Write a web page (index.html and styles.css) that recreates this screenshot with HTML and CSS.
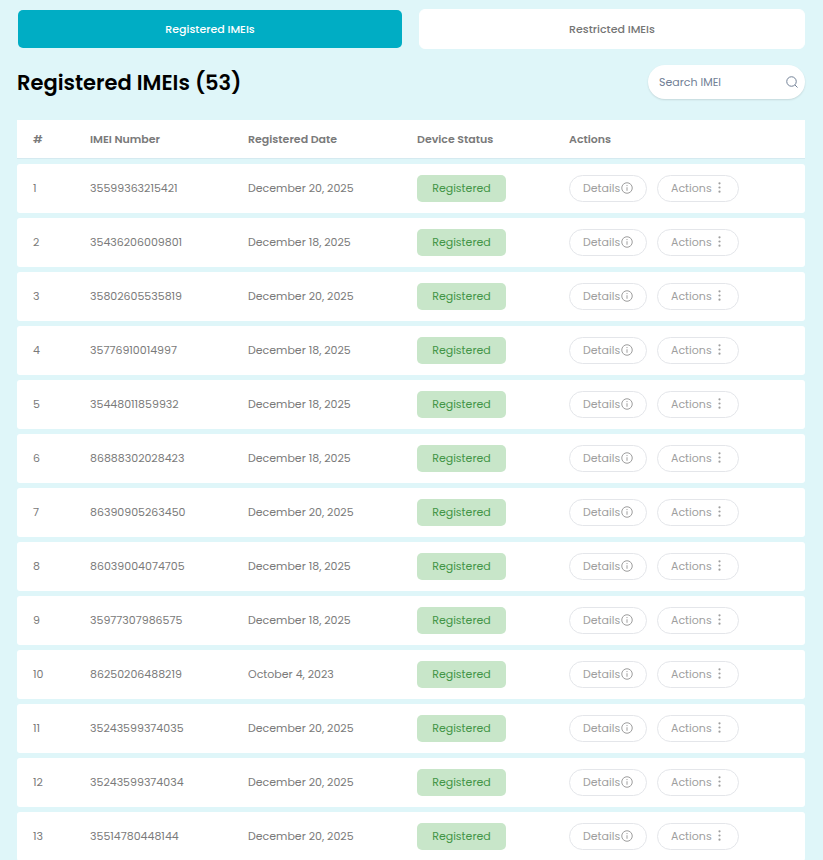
FILE: index.html
```html
<!DOCTYPE html>
<html lang="en">
<head>
    <meta charset="UTF-8">
    <meta name="viewport" content="width=device-width, initial-scale=1.0">
    <title>Registered IMEIs</title>
    <link rel="stylesheet" href="styles.css">
</head>
<body>
    <svg class="sprite" aria-hidden="true">
        <symbol id="icon-info" viewBox="0 0 24 24">
            <circle cx="12" cy="12" r="10.5"/>
            <path d="M12 10.5v7M12 6v2.2"/>
        </symbol>
        <symbol id="icon-search" viewBox="0 0 24 24">
            <circle cx="11" cy="11" r="9.5"/>
            <path d="M18 18l5 5"/>
        </symbol>
    </svg>

    <main class="page">
        <nav class="tabs">
            <button type="button" class="tab active">Registered IMEIs</button>
            <button type="button" class="tab">Restricted IMEIs</button>
        </nav>

        <div class="toolbar">
            <h1>Registered IMEIs (53)</h1>
            <label class="search">
                <input type="text" id="search" placeholder="Search IMEI" aria-label="Search IMEI">
                <svg class="icon"><use href="#icon-search"/></svg>
            </label>
        </div>

        <table class="imei-table">
            <colgroup>
                <col class="col-index">
                <col class="col-imei">
                <col class="col-date">
                <col class="col-status">
                <col>
            </colgroup>
            <thead>
                <tr>
                    <th>#</th>
                    <th>IMEI Number</th>
                    <th>Registered Date</th>
                    <th>Device Status</th>
                    <th>Actions</th>
                </tr>
            </thead>
            <tbody id="devices">
            </tbody>
        </table>
    </main>

    <script src="script.js"></script>
</body>
</html>
```
FILE: styles.css
```css
* {
    box-sizing: border-box;
}
body {
    margin: 0;
    font-family: Poppins, Inter, sans-serif;
    font-size: 11px;
    color: #7a7a7a;
    background-color: #dff6f9;
}
button, input {
    font: inherit;
}
.sprite {
    display: none;
}
.page {
    height: 100vh;
    padding: 9px 18px 0 17px;
    overflow: hidden;
}

/* tabs */
.tabs {
    display: grid;
    grid-template-columns: 1fr 1fr;
    gap: 16px;
}
.tab {
    height: 40px;
    border: 1px solid #fff;
    border-radius: 6px;
    background: #fff;
    color: #757575;
    font-weight: 500;
    cursor: pointer;
}
.tab.active {
    border-color: transparent;
    background: #00adc4;
    background-clip: padding-box;
    color: #fff;
}

/* heading and search */
.toolbar {
    display: flex;
    justify-content: space-between;
    align-items: center;
    margin: 16px 0;
}
h1 {
    margin: 0;
    font-size: 21px;
    font-weight: 600;
    color: #000;
}
.search {
    display: flex;
    align-items: center;
    width: 157px;
    height: 34px;
    padding: 0 7px 0 11px;
    border-radius: 17px;
    background: #fff;
    box-shadow: 0 1px 2px rgba(0, 0, 0, 0.12);
}
.search input {
    flex: 1;
    min-width: 0;
    padding: 0;
    border: none;
    outline: none;
    background: none;
}
.search input::placeholder {
    color: #718096;
}
.icon {
    width: 12px;
    height: 12px;
    fill: none;
    stroke: currentColor;
    stroke-width: 2;
}
.search .icon {
    color: #718096;
}

/* table */
.imei-table {
    width: 100%;
    table-layout: fixed;
    border-collapse: separate;
    border-spacing: 0 5px;
}
.col-index {
    width: 57px;
}
.col-imei {
    width: 158px;
}
.col-date {
    width: 169px;
}
.col-status {
    width: 152px;
}
th, td {
    padding: 0 16px;
    text-align: left;
    background: #fff;
}
th {
    height: 39px;
    border-bottom: 1px solid #d5eaf0;
    font-weight: 600;
}
td {
    height: 49px;
}
td:first-child {
    border-radius: 3px 0 0 3px;
}
td:last-child {
    border-radius: 0 3px 3px 0;
}
.badge {
    display: inline-flex;
    align-items: center;
    justify-content: center;
    width: 89px;
    height: 27px;
    border-radius: 5px;
    background: #c8e6c9;
    color: #439547;
}
.row-actions {
    display: flex;
    gap: 10px;
}
.pill {
    display: flex;
    align-items: center;
    gap: 1px;
    width: 78px;
    height: 27px;
    padding: 0 13px;
    border: 1px solid #e4e6ea;
    border-radius: 14px;
    background: #fff;
    color: #9e9e9e;
    cursor: pointer;
}
.pill svg {
    flex: none;
    margin-bottom: 2px;
}
.pill-menu {
    gap: 6px;
    width: 82px;
}
.dots {
    width: 3px;
    height: 11px;
    fill: currentColor;
}
```
FILE: script.js
```js
const devices = [
    { imei: '35599363215421', date: 'December 20, 2025' },
    { imei: '35436206009801', date: 'December 18, 2025' },
    { imei: '35802605535819', date: 'December 20, 2025' },
    { imei: '35776910014997', date: 'December 18, 2025' },
    { imei: '35448011859932', date: 'December 18, 2025' },
    { imei: '86888302028423', date: 'December 18, 2025' },
    { imei: '86390905263450', date: 'December 20, 2025' },
    { imei: '86039004074705', date: 'December 18, 2025' },
    { imei: '35977307986575', date: 'December 18, 2025' },
    { imei: '86250206488219', date: 'October 4, 2023' },
    { imei: '35243599374035', date: 'December 20, 2025' },
    { imei: '35243599374034', date: 'December 20, 2025' },
    { imei: '35514780448144', date: 'December 20, 2025' }
];

const rows = devices.map((device, index) => `
    <tr>
        <td>${index + 1}</td>
        <td>${device.imei}</td>
        <td>${device.date}</td>
        <td><span class="badge">Registered</span></td>
        <td>
            <div class="row-actions">
                <button type="button" class="pill">Details<svg class="icon"><use href="#icon-info"/></svg></button>
                <button type="button" class="pill pill-menu">Actions<svg class="dots" viewBox="0 0 3 11"><circle cx="1.5" cy="1.3" r="1.1"/><circle cx="1.5" cy="5.5" r="1.1"/><circle cx="1.5" cy="9.7" r="1.1"/></svg></button>
            </div>
        </td>
    </tr>
`);
document.getElementById('devices').innerHTML = rows.join('');
```
